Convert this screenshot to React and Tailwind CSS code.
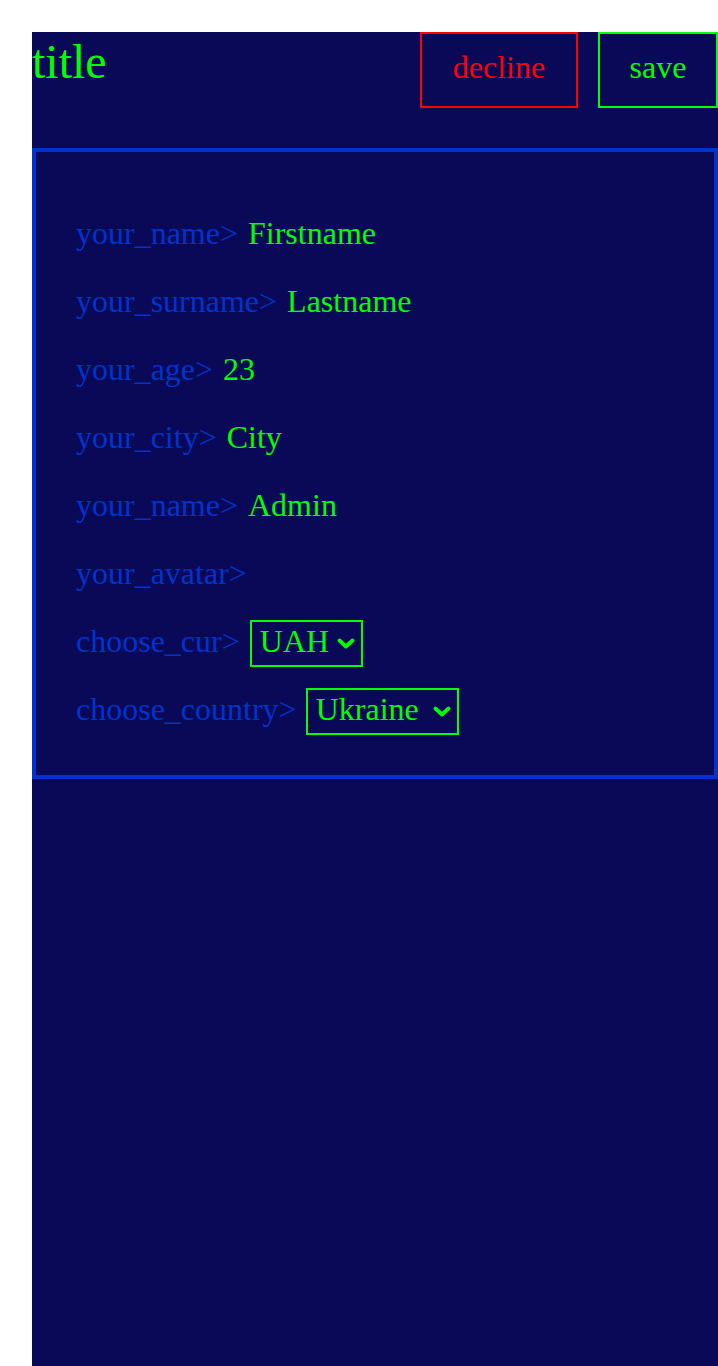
import React from 'react'

const fields = [
  { label: 'your_name>', value: 'Firstname' },
  { label: 'your_surname>', value: 'Lastname' },
  { label: 'your_age>', value: '23' },
  { label: 'your_city>', value: 'City' },
  { label: 'your_name>', value: 'Admin' },
  { label: 'your_avatar>', value: '' },
]

const Chevron = () => (
  <svg width="18" height="11" viewBox="0 0 18 11" className="shrink-0">
    <polyline
      points="2.5,2.5 9,8.5 15.5,2.5"
      fill="none"
      stroke="#00ff00"
      strokeWidth="3.8"
      strokeLinecap="round"
      strokeLinejoin="round"
    />
  </svg>
)

const FakeSelect = ({ value, className }) => (
  <div
    className={`-mt-[3px] mb-[-1px] flex h-[47px] items-center justify-between border-2 border-[#00ff00] pl-[8px] pr-[6px] ${className}`}
  >
    <span className="pb-[4px] text-[#00ff00]">{value}</span>
    <Chevron />
  </div>
)

export default function App() {
  return (
    <div className="min-h-[1366px] bg-white pl-[32px] pt-[32px] font-['Liberation_Serif',serif]">
      <div className="min-h-[1334px] w-[686px] bg-[#090958]">
        {/* Header */}
        <div className="flex items-start justify-between">
          <h1 className="-mt-[6px] text-[48px] leading-normal text-[#00ff00]">title</h1>
          <div className="flex gap-[20px]">
            <button className="flex h-[76px] w-[158px] items-start justify-center border-2 border-[#ff0000] pt-[9px] text-[32px] leading-normal text-[#ff0000]">
              decline
            </button>
            <button className="flex h-[76px] w-[120px] items-start justify-center border-2 border-[#00ff00] pt-[9px] text-[32px] leading-normal text-[#00ff00]">
              save
            </button>
          </div>
        </div>

        {/* Form */}
        <div className="mt-[40px] h-[631px] border-4 border-[#0033cc] pl-[40px] pt-[57px] text-[32px] leading-normal">
          {fields.map((f, idx) => (
            <div key={idx} className="flex h-[68px] items-baseline">
              <span className="text-[#0033cc]">{f.label}</span>
              {f.value && <span className="ml-[10px] text-[#00ff00]">{f.value}</span>}
            </div>
          ))}
          <div className="flex h-[68px] items-baseline">
            <span className="text-[#0033cc]">choose_cur&gt;</span>
            <FakeSelect value="UAH" className="ml-[10px] w-[113px]" />
          </div>
          <div className="flex h-[68px] items-baseline">
            <span className="text-[#0033cc]">choose_country&gt;</span>
            <FakeSelect value="Ukraine" className="ml-[9px] w-[153px]" />
          </div>
        </div>
      </div>
    </div>
  )
}
